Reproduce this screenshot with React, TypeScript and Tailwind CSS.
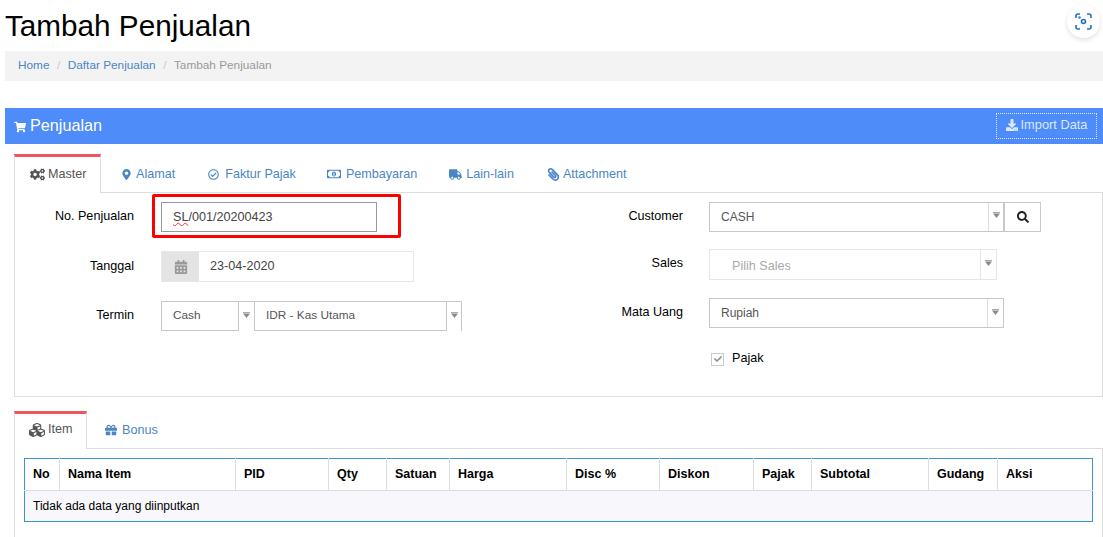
import React from "react";
import { FaShoppingCart, FaCogs, FaMapMarkerAlt, FaRegCheckCircle, FaRegMoneyBillAlt, FaTruck, FaPaperclip, FaCubes, FaGift, FaDownload, FaSearch, FaCalendarAlt, FaCheck } from "react-icons/fa";

function Arrow() {
  return (
    <svg width="7" height="6" viewBox="0 0 7 6" className="shrink-0">
      <rect x="0" y="0" width="7" height="1" fill="#aaa" />
      <polygon points="0,1.5 7,1.5 3.5,6" fill="#888" />
    </svg>
  );
}

function Select({ w, arrowW, text, h = "h-[30px]", light = false, textClass = "text-[#555] text-[12px]", pl = "pl-[11px]", arrowPt = "pt-[10px]" }: { w: string; arrowW: string; text: string; h?: string; light?: boolean; textClass?: string; pl?: string; arrowPt?: string }) {
  return (
    <div className={`flex ${h} ${w} border ${light ? "border-[#e6e6e6]" : "border-[#c8c8c8]"} bg-white`}>
      <div className={`flex flex-1 items-center ${pl} ${textClass}`}>{text}</div>
      <div className={`flex ${arrowW} items-start justify-center border-l ${light ? "border-[#e6e6e6]" : "border-[#ddd]"} ${arrowPt}`}>
        <Arrow />
      </div>
    </div>
  );
}

function Tab({ icon, label, active = false, className = "" }: { icon: React.ReactNode; label: string; active?: boolean; className?: string }) {
  return (
    <div className={`-mb-px flex h-[39px] items-center text-[12.6px] ${active ? "border-x border-t-[3px] border-x-[#ddd] border-t-[#f4535f] bg-white pb-[2px] text-[#555]" : "pt-[1px] text-[#4a86c5]"} ${className}`}>
      {icon}
      <span>{label}</span>
    </div>
  );
}

const cols = [
  ["No", 35], ["Nama Item", 176], ["PID", 93], ["Qty", 58], ["Satuan", 63], ["Harga", 117],
  ["Disc %", 93], ["Diskon", 94], ["Pajak", 58], ["Subtotal", 117], ["Gudang", 69], ["Aksi", 95],
] as const;

export default function App() {
  return (
    <div className="relative h-[537px] w-[1103px] overflow-hidden bg-white font-['Liberation_Sans',Arial,sans-serif] text-black">
      <h1 className="ml-[5px] h-[51px] pt-[8px] text-[29.7px] leading-[36px]">Tambah Penjualan</h1>

      <div className="absolute left-[1067px] top-[5px] flex h-[33px] w-[33px] items-center justify-center rounded-full bg-white shadow-[0_2px_5px_rgba(0,0,0,0.12)]">
        <svg width="17" height="17" viewBox="0 0 17 17" fill="none" stroke="#1f6fc4" strokeWidth="1.6">
          <path d="M5 1H3a2 2 0 0 0-2 2v2M12 1h2a2 2 0 0 1 2 2v2M5 16H3a2 2 0 0 1-2-2v-2M12 16h2a2 2 0 0 0 2-2v-2" />
          <circle cx="8.5" cy="8.5" r="2" />
          <circle cx="4.5" cy="4.5" r="0.5" />
        </svg>
      </div>

      <nav className="ml-[5px] flex h-[30px] items-center bg-[#f3f3f3] pl-[13px] text-[11.8px]">
        <span className="text-[#4a86c5]">Home</span>
        <span className="px-[7.5px] text-[#ccc]">/</span>
        <span className="text-[#4a86c5]">Daftar Penjualan</span>
        <span className="px-[7.5px] text-[#ccc]">/</span>
        <span className="text-[#999]">Tambah Penjualan</span>
      </nav>

      <div className="ml-[5px] mt-[27px] flex h-[36px] items-center justify-between bg-[#4d8cf9] pl-[9px] pr-[6px] text-white">
        <div className="flex items-center pb-[1px] text-[16.2px]">
          <FaShoppingCart className="mr-[4px] mt-[3px] text-[12px]" />
          <span>Penjualan</span>
        </div>
        <div className="flex h-[26px] w-[101px] items-center justify-center border border-dotted border-[#dbe8ff] pb-[2px] text-[12.8px] text-[#dbe8ff]">
          <FaDownload className="mr-[3px] text-[12px]" />
          <span>Import Data</span>
        </div>
      </div>

      <div className="ml-[14px] mt-[10px] flex h-[39px] border-b border-[#ddd]">
        <Tab active icon={<FaCogs className="mr-[3px] text-[15px]" />} label="Master" className="w-[87px] pl-[15px]" />
        <Tab icon={<FaMapMarkerAlt className="mr-[4px] text-[11px]" />} label="Alamat" className="ml-[20px]" />
        <Tab icon={<FaRegCheckCircle className="mr-[6px] text-[11px]" />} label="Faktur Pajak" className="ml-[33px]" />
        <Tab icon={<FaRegMoneyBillAlt className="mr-[5px] text-[14px]" />} label="Pembayaran" className="ml-[31px]" />
        <Tab icon={<FaTruck className="mr-[4px] text-[13px]" />} label="Lain-lain" className="ml-[32px]" />
        <Tab icon={<FaPaperclip className="mr-[3px] -scale-x-100 text-[13px]" />} label="Attachment" className="ml-[33px]" />
      </div>

      <div className="ml-[14px] flex h-[204px] border-x border-b border-[#ddd] text-[12.6px]">
        <div className="w-[566px] pt-[9px]">
          <div className="flex h-[30px]">
            <div className="w-[119px] pt-[5px] text-right">No. Penjualan</div>
            <div className="ml-[27px] flex h-[30px] w-[216px] items-center border border-[#999] pl-[11px] text-[#444]">
              <span className="underline decoration-red-500 decoration-wavy decoration-1">SL</span>/001/20200423
            </div>
          </div>
          <div className="mt-[19px] flex h-[31px]">
            <div className="w-[119px] pt-[6px] text-right">Tanggal</div>
            <div className="ml-[27px] flex h-[31px] w-[253px] border border-[#e8e8e8]">
              <div className="flex w-[37px] items-center justify-center bg-[#e4e4e4]">
                <FaCalendarAlt className="text-[14px] text-[#999]" />
              </div>
              <div className="flex items-center pl-[11px] text-[#444]">23-04-2020</div>
            </div>
          </div>
          <div className="mt-[19px] flex h-[30px]">
            <div className="w-[119px] pt-[5px] text-right">Termin</div>
            <div className="ml-[27px] flex h-[30px] w-[301px] border-t border-[#c8c8c8]">
              <div className="flex w-[78px] items-center border-x border-b border-[#c8c8c8] pb-[1px] pl-[11px] text-[11.8px] text-[#555]">Cash</div>
              <div className="flex w-[15px] justify-center pt-[10px]"><Arrow /></div>
              <div className="flex w-[193px] items-center border-x border-b border-[#c8c8c8] pb-[1px] pl-[11px] text-[11.8px] text-[#555]">IDR - Kas Utama</div>
              <div className="flex flex-1 justify-center border-r border-[#c8c8c8] pt-[10px]"><Arrow /></div>
            </div>
          </div>
        </div>

        <div className="flex-1 pt-[9px]">
          <div className="flex h-[30px]">
            <div className="w-[102px] pt-[5px] text-right">Customer</div>
            <div className="ml-[26px] flex">
              <Select w="w-[295px]" arrowW="w-[15px]" text="CASH" textClass="pb-[1px] text-[12px] text-[#555]" arrowPt="pt-[9px]" />
              <div className="flex h-[30px] w-[37px] items-center justify-center border border-[#c8c8c8] bg-white">
                <FaSearch className="text-[12px] text-[#222]" />
              </div>
            </div>
          </div>
          <div className="mt-[17px] flex h-[31px]">
            <div className="w-[102px] pt-[5px] text-right">Sales</div>
            <div className="ml-[26px]">
              <Select w="w-[288px]" arrowW="w-[16px]" h="h-[31px]" light text="Pilih Sales" textClass="pt-[4px] text-[12.6px] text-[#aaa]" pl="pl-[22px]" />
            </div>
          </div>
          <div className="mt-[18px] flex h-[30px]">
            <div className="w-[102px] pt-[5px] text-right">Mata Uang</div>
            <div className="ml-[26px]">
              <Select w="w-[295px]" arrowW="w-[16px]" text="Rupiah" />
            </div>
          </div>
          <div className="ml-[130px] mt-[23px] flex items-center">
            <div className="flex h-[13px] w-[13px] items-center justify-center border border-[#ccc] bg-white">
              <FaCheck className="text-[8px] text-[#888]" />
            </div>
            <span className="-mt-[2px] ml-[8px]">Pajak</span>
          </div>
        </div>
      </div>

      <div className="ml-[14px] mt-[14px] flex h-[38px] border-b border-[#ddd]">
        <div className="-mb-px flex h-[38px] w-[73px] items-center border-x border-t-[3px] border-x-[#ddd] border-t-[#f4535f] bg-white pb-[4px] pl-[14px] text-[12.6px] text-[#555]">
          <FaCubes className="mr-[3px] text-[16px]" />
          <span>Item</span>
        </div>
        <div className="flex items-center pl-[18px] pt-[1px] text-[12.6px] text-[#4a86c5]">
          <FaGift className="mr-[5px] text-[12px]" />
          <span>Bonus</span>
        </div>
      </div>

      <div className="ml-[14px] h-[100px] border-x border-[#ddd] pl-[9px] pr-[9px] pt-[9px]">
        <table className="w-[1069px] table-fixed border-collapse border border-[#3c97c8] text-[12px]">
          <colgroup>
            {cols.map(([n, w]) => <col key={n} style={{ width: w }} />)}
          </colgroup>
          <thead>
            <tr className="h-[32px]">
              {cols.map(([n]) => (
                <th key={n} className="border-b border-r border-[#ddd] pl-[8px] text-left text-[12.5px] font-bold last:border-r-0">{n}</th>
              ))}
            </tr>
          </thead>
          <tbody>
            <tr className="h-[31px] bg-[#f8f8fc]">
              <td colSpan={12} className="pl-[8px]">Tidak ada data yang diinputkan</td>
            </tr>
          </tbody>
        </table>
      </div>

      <div className="pointer-events-none absolute left-[152px] top-[194px] h-[44px] w-[249px] rounded-[2px] border-[3px] border-[#f00]" />
    </div>
  );
}
